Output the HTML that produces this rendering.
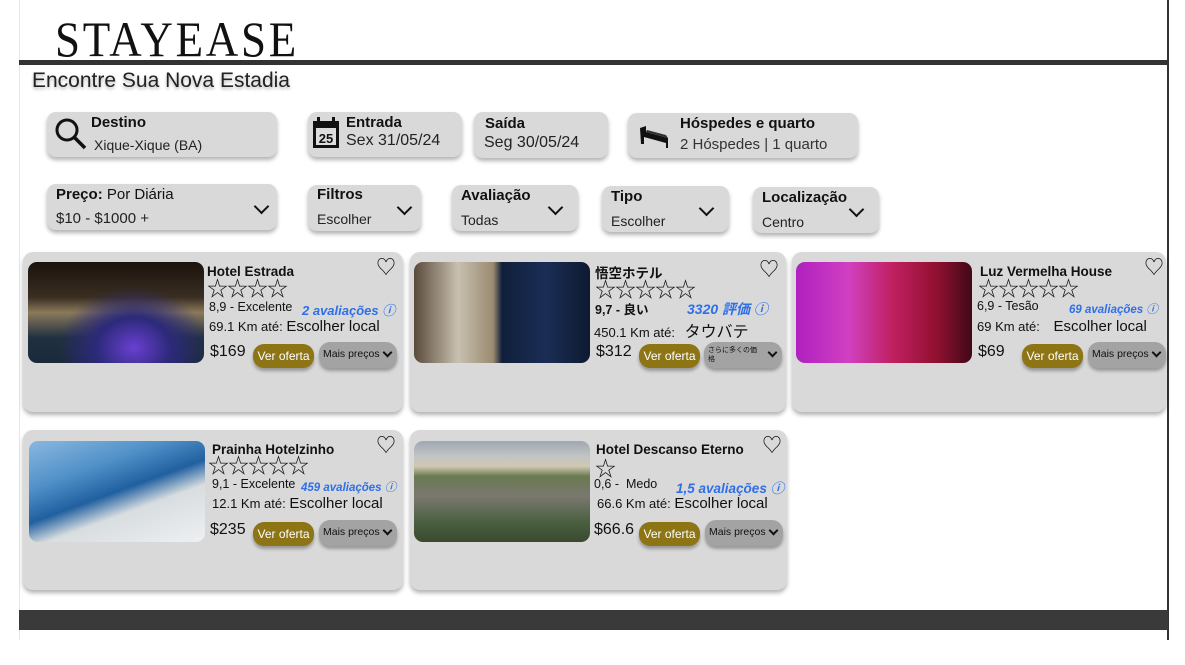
<!DOCTYPE html>
<html><head><meta charset="utf-8">
<style>
*{margin:0;padding:0;box-sizing:border-box}
body{width:1185px;height:665px;background:#fff;position:relative;overflow:hidden;font-family:"Liberation Sans","Noto Sans CJK JP",sans-serif;color:#111}
.a{position:absolute}
.box{position:absolute;background:#d9d9d9;border-radius:9px;box-shadow:0 3px 4px rgba(0,0,0,.3)}
.b{font-weight:bold;font-size:15px;position:absolute;white-space:nowrap}
.n{font-size:15px;position:absolute;white-space:nowrap;color:#222}
.chev{position:absolute;width:11px;height:11px;border-right:2.5px solid #111;border-bottom:2.5px solid #111;transform:rotate(45deg)}
.card{position:absolute;background:#d9d9d9;border-radius:10px;box-shadow:0 3px 4px rgba(0,0,0,.3);width:380px;height:160px}
.img{position:absolute;left:5px;top:10px;width:176px;height:101px;border-radius:9px}
.nm{position:absolute;top:12px;font-weight:bold;font-size:13.5px;white-space:nowrap}
.st{position:absolute;font-size:21px;letter-spacing:-1px;line-height:21px;color:#111}
.rt{position:absolute;font-size:12.5px;white-space:nowrap}
.rv{position:absolute;font-size:13px;font-style:italic;font-weight:bold;color:#2f6fe8;white-space:nowrap}
.ds{position:absolute;font-size:13px;white-space:nowrap}
.ds span{font-size:15px}
.pr{position:absolute;font-size:16px}
.vo{position:absolute;background:#8d7414;color:#fff;font-size:12px;border-radius:11px;width:61px;height:24px;text-align:center;line-height:24px;box-shadow:0 3px 3px rgba(0,0,0,.3)}
.mp{position:absolute;background:#a3a3a3;color:#111;font-size:10.5px;border-radius:11px;width:78px;height:26px;line-height:24px;padding-left:4px;box-shadow:0 3px 3px rgba(0,0,0,.3);white-space:nowrap}
.mp i{position:absolute;right:6px;top:7px;width:7px;height:7px;border-right:2px solid #111;border-bottom:2px solid #111;transform:rotate(45deg)}
.ht{position:absolute;font-size:20px;line-height:20px}
</style></head><body>
<div class="a" style="left:19px;top:0;width:1px;height:640px;background:#e6e6e6"></div>
<div class="a" style="left:1167px;top:0;width:2px;height:640px;background:#333"></div>
<div class="a" style="left:55px;top:14px;font-family:'Liberation Serif',serif;font-size:50px;letter-spacing:3px;line-height:50px;color:#111;transform:scaleX(0.9);transform-origin:left">STAYEASE</div>
<div class="a" style="left:19px;top:60px;width:1149px;height:5px;background:#333"></div>
<div class="a" style="left:32px;top:69px;font-size:21px;color:#222;text-shadow:0 2px 3px rgba(0,0,0,.3)">Encontre Sua Nova Estadia</div>

<div class="box" style="left:47px;top:112px;width:230px;height:45px"></div>
<svg class="a" style="left:53px;top:116px" width="36" height="36" viewBox="0 0 36 36"><circle cx="14" cy="14" r="10" fill="none" stroke="#111" stroke-width="3"/><line x1="21" y1="21" x2="32" y2="32" stroke="#111" stroke-width="3.5"/></svg>
<div class="b" style="left:91px;top:114px">Destino</div>
<div class="n" style="left:94px;top:137px;font-size:14px">Xique-Xique (BA)</div>

<div class="box" style="left:308px;top:112px;width:154px;height:45px"></div>
<svg class="a" style="left:312px;top:117px" width="28" height="32" viewBox="0 0 28 32"><rect x="1" y="4" width="26" height="27" fill="#111"/><rect x="4" y="11" width="20" height="17" fill="#ddd"/><text x="14" y="26" font-size="13" font-weight="bold" text-anchor="middle" fill="#111" font-family="Liberation Sans">25</text><rect x="5" y="0" width="3" height="7" fill="#111"/><rect x="20" y="0" width="3" height="7" fill="#111"/></svg>
<div class="b" style="left:346px;top:114px">Entrada</div>
<div class="n" style="left:346px;top:132px;font-size:16px">Sex 31/05/24</div>

<div class="box" style="left:474px;top:112px;width:134px;height:46px"></div>
<div class="b" style="left:485px;top:115px">Saída</div>
<div class="n" style="left:484px;top:134px;font-size:16px">Seg 30/05/24</div>

<div class="box" style="left:628px;top:113px;width:230px;height:45px"></div>
<svg class="a" style="left:638px;top:124px" width="34" height="26" viewBox="0 0 34 26"><path d="M2 4 L8 2 L8 8 L30 14 L30 24 L28 24 L28 19 L6 13 L6 20 L3 20 Z" fill="#111"/><path d="M9 6 L28 11 L30 14 L8 8 Z" fill="#333"/></svg>
<div class="b" style="left:680px;top:115px">Hóspedes e quarto</div>
<div class="n" style="left:680px;top:136px;font-size:15px;color:#333">2 Hóspedes | 1 quarto</div>

<div class="box" style="left:47px;top:184px;width:230px;height:46px"></div>
<div class="b" style="left:56px;top:186px">Preço: <span style="font-weight:normal">Por Diária</span></div>
<div class="n" style="left:56px;top:210px">$10 - $1000 +</div>
<div class="chev" style="left:256px;top:201px"></div>

<div class="box" style="left:308px;top:185px;width:113px;height:46px"></div>
<div class="b" style="left:317px;top:186px">Filtros</div>
<div class="n" style="left:317px;top:211px;font-size:14px">Escolher</div>
<div class="chev" style="left:399px;top:202px"></div>

<div class="box" style="left:452px;top:185px;width:126px;height:46px"></div>
<div class="b" style="left:461px;top:187px">Avaliação</div>
<div class="n" style="left:461px;top:212px;font-size:14px">Todas</div>
<div class="chev" style="left:550px;top:202px"></div>

<div class="box" style="left:602px;top:186px;width:127px;height:46px"></div>
<div class="b" style="left:611px;top:188px">Tipo</div>
<div class="n" style="left:611px;top:213px;font-size:14px">Escolher</div>
<div class="chev" style="left:701px;top:203px"></div>

<div class="box" style="left:753px;top:187px;width:126px;height:46px"></div>
<div class="b" style="left:762px;top:189px">Localização</div>
<div class="n" style="left:762px;top:214px;font-size:14px">Centro</div>
<div class="chev" style="left:851px;top:204px"></div>

<!-- card1 -->
<div class="card" style="left:23px;top:252px">
<div class="img" style="background:radial-gradient(ellipse at 60% 85%,#6a3fd0 0,#2c2a7a 25%,transparent 50%),linear-gradient(180deg,#1a120c 0,#3a2e22 35%,#8a7a5a 50%,#203040 75%,#1b2a3a 100%)"></div>
<div class="nm" style="left:184px">Hotel Estrada</div>
<div class="ht" style="left:353px;top:6px">♡</div>
<div class="st" style="left:184px;top:27px">☆☆☆☆</div>
<div class="rt" style="left:186px;top:48px">8,9 - Excelente</div>
<div class="rv" style="left:279px;top:48px">2 avaliações ⓘ</div>
<div class="ds" style="left:186px;top:66px">69.1 Km até: <span>Escolher local</span></div>
<div class="pr" style="left:187px;top:91px">$169</div>
<div class="vo" style="left:230px;top:92px">Ver oferta</div>
<div class="mp" style="left:296px;top:90px">Mais preços<i></i></div>
</div>
<!-- card2 -->
<div class="card" style="left:410px;top:252px;width:376px">
<div class="img" style="left:4px;background:linear-gradient(90deg,#5a4a3a 0,#c8c0b0 25%,#9a8a70 45%,#10203a 50%,#1a2d55 75%,#0e1a30 100%)"></div>
<div class="nm" style="left:185px;top:10px">悟空ホテル</div>
<div class="ht" style="left:349px;top:8px">♡</div>
<div class="st" style="left:185px;top:28px">☆☆☆☆☆</div>
<div class="rt" style="left:185px;top:47px;font-weight:bold">9,7 - 良い</div>
<div class="rv" style="left:277px;top:47px;font-size:14px">3320 評価 ⓘ</div>
<div class="ds" style="left:184px;top:66px;font-size:13px">450.1 Km até: <span style="font-size:16px;margin-left:6px">タウバテ</span></div>
<div class="pr" style="left:186px;top:91px">$312</div>
<div class="vo" style="left:229px;top:92px">Ver oferta</div>
<div class="mp" style="left:294px;top:90px;font-size:7px;line-height:9px;padding-top:4px;width:78px">さらに多くの価<br>格<i></i></div>
</div>
<!-- card3 -->
<div class="card" style="left:792px;top:252px;width:374px">
<div class="img" style="left:4px;background:linear-gradient(90deg,#b020c0 0,#d040c0 30%,#c02060 55%,#901030 80%,#400818 100%)"></div>
<div class="nm" style="left:188px">Luz Vermelha House</div>
<div class="ht" style="left:352px;top:6px">♡</div>
<div class="st" style="left:186px;top:27px">☆☆☆☆☆</div>
<div class="rt" style="left:185px;top:47px">6,9 - Tesão</div>
<div class="rv" style="left:277px;top:49px;font-size:11.5px">69 avaliações ⓘ</div>
<div class="ds" style="left:185px;top:66px">69 Km até: <span style="margin-left:10px">Escolher local</span></div>
<div class="pr" style="left:186px;top:91px">$69</div>
<div class="vo" style="left:230px;top:92px">Ver oferta</div>
<div class="mp" style="left:296px;top:90px">Mais preços<i></i></div>
</div>
<!-- card4 -->
<div class="card" style="left:23px;top:430px">
<div class="img" style="left:6px;top:11px;background:linear-gradient(160deg,#8ab8e0 0,#5090c8 30%,#2060a0 50%,#d8dde0 65%,#eef0f2 100%)"></div>
<div class="nm" style="left:189px">Prainha Hotelzinho</div>
<div class="ht" style="left:353px;top:6px">♡</div>
<div class="st" style="left:185px;top:26px">☆☆☆☆☆</div>
<div class="rt" style="left:189px;top:47px">9,1 - Excelente</div>
<div class="rv" style="left:278px;top:49px;font-size:11.5px">459 avaliações ⓘ</div>
<div class="ds" style="left:189px;top:65px">12.1 Km até: <span>Escolher local</span></div>
<div class="pr" style="left:187px;top:91px">$235</div>
<div class="vo" style="left:230px;top:92px">Ver oferta</div>
<div class="mp" style="left:296px;top:90px">Mais preços<i></i></div>
</div>
<!-- card5 -->
<div class="card" style="left:410px;top:430px;width:377px">
<div class="img" style="left:4px;top:11px;background:linear-gradient(180deg,#a0a8b0 0,#c0c4c4 15%,#d0c8b0 25%,#6a7a50 35%,#7a7870 55%,#4a6040 80%,#3a4a30 100%)"></div>
<div class="nm" style="left:186px">Hotel Descanso Eterno</div>
<div class="ht" style="left:352px;top:6px">♡</div>
<div class="st" style="left:185px;top:29px">☆</div>
<div class="rt" style="left:184px;top:47px">0,6 -&nbsp; Medo</div>
<div class="rv" style="left:266px;top:47px;font-size:13.5px">1,5 avaliações ⓘ</div>
<div class="ds" style="left:187px;top:65px">66.6 Km até: <span>Escolher local</span></div>
<div class="pr" style="left:184px;top:91px">$66.6</div>
<div class="vo" style="left:229px;top:92px">Ver oferta</div>
<div class="mp" style="left:295px;top:90px">Mais preços<i></i></div>
</div>

<div class="a" style="left:19px;top:610px;width:1149px;height:20px;background:#3a3a3a"></div>
</body></html>
